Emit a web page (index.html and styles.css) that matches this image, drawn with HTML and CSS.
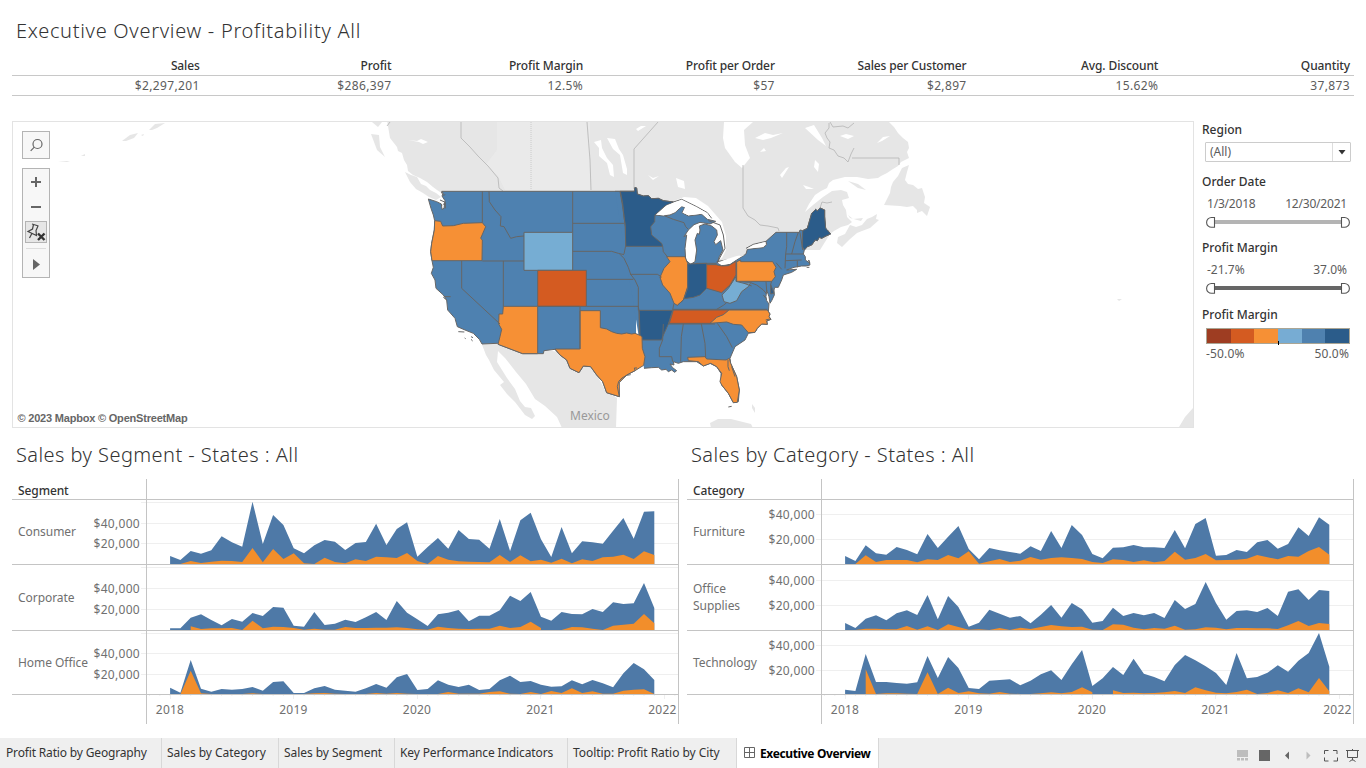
FILE: index.html
```
<!DOCTYPE html>
<html lang="en">
<head>
<meta charset="utf-8">
<title>Executive Overview</title>
<link rel="stylesheet" href="styles.css">
</head>
<body>
<main class="dash">
  <h1 class="title t-main">Executive Overview - Profitability All</h1>
  <section class="kpis">
    <div class="kpi"><b>Sales</b><span>$2,297,201</span></div>
    <div class="kpi"><b>Profit</b><span>$286,397</span></div>
    <div class="kpi"><b>Profit Margin</b><span>12.5%</span></div>
    <div class="kpi"><b>Profit per Order</b><span>$57</span></div>
    <div class="kpi"><b>Sales per Customer</b><span>$2,897</span></div>
    <div class="kpi"><b>Avg. Discount</b><span>15.62%</span></div>
    <div class="kpi"><b>Quantity</b><span>37,873</span></div>
  </section>
  <section class="middle">
    <div class="map">
      <svg class="mapsvg" viewBox="13 122 1180 305" width="1180" height="305">
        <g class="land">
          <path d="M387,120 L390,138 397,147 398,151 402,153 404,160 407,165 408,171 413,175 420,178 427,182 433,187 437,190 443,194 L640,200 L700,270 L780,250 L820,250 L830,234 834,231 841,227 848,225 852,222 847,217 846,210 843,205 842,200 849,198 847,192 841,190 832,191 823,197 813,205 805,212 809,204 815,195 821,191 827,188 829,183 833,180 845,177 857,177 868,179 878,178 881,176 887,173 893,169 898,166 901,162 909,158 907,152 909,148 908,142 903,138 898,133 894,127 887,120Z"/>
          <path d="M405,172 L411,175 417,177 421,184 426,186 430,190 436,193 441,197 436,200 429,197 423,193 416,189 410,182Z M371,134 L379,135 380,147 385,157 377,150Z M372,122 l10,0 -4,5Z"/>
          <path d="M850,225 L856,227 862,225 867,219 872,217 877,214 876,219 879,220 870,228 862,231 857,233 850,239 842,247 837,243 838,237 845,234Z M902,168 L909,165 907,172 905,180 908,184 913,185 918,189 922,188 925,197 924,203 930,207 927,216 922,211 917,213 917,210 913,206 907,207 900,206 884,205 887,199 890,193 891,187 893,182 898,176Z M848,181 L858,184 866,190 858,188Z M848,215 L853,219 863,218 861,221 850,218Z"/>
          <path d="M481,342 L500,344 520,352 544,350 560,352 577,368 590,362 605,390 617,398 616,428 562,428 557,417 545,406 535,399 526,384 516,372 505,358 498,351 497,362 507,378 515,389 520,401 525,407 531,408 535,416 532,419 525,415 515,402 507,394 500,385 504,382 494,370 489,360 486,355Z"/>
          <path d="M710,423 l8,-4 13,0 20,5 2,4 H711Z M752,404 l3,4 0,5 -3,-5Z M1179,427 l6,-10 8,-9 V427Z M1117,299 l5,0 -3,2Z"/>
          <path d="M122,141 l8,-6 8,-2 -4,5 -8,3Z M149,130 l6,-6 10,-1 -8,5 -5,2Z M58,161 l12,0 -3,1Z M81,156 l4,-2 0,2Z M141,135 l3,-1 -1,2Z"/>
        </g>
        <g class="relief">
          <path d="M497,122 H590 V190 H505 L498,176 486,164 497,150Z"/>
        </g>
        <g class="water">
          <path d="M724,122 H753 L744,130 745,145 750,158 742,168 735,162 725,148 723,138Z"/>
          <path d="M607,138 l8,1 4,10 4,6 4,14 0,6 -4,-2 -3,-18 -7,-6Z M594,142 l7,-2 1,8 5,10 6,7 1,12 -4,-2 -3,-12 -8,-7 0,-8Z M636,129 l5,-3 5,0 -8,5Z M648,175 l5,3 6,-2 -6,4Z M676,178 l8,3 1,8 -7,-2Z M408,140 l9,1 4,-2 7,3 -5,2 -4,-2Z M755,138 l10,-5 8,2 10,-2 -12,5 -8,2Z M805,128 l9,-3 8,13 4,8 -8,-6Z M840,136 l6,-2 8,2 -6,3Z M780,175 l6,-7 3,-1 -7,11Z M815,160 l4,4 -1,8 -4,-5Z M877,143 l6,-6 7,-1 -8,5Z M803,185 l6,2 5,2 -8,0Z M760,152 l4,-4 2,3Z"/>
          <path d="M674,201 L684,197 696,198 708,206 715,214 722,222 726,236 726,250 722,258 708,266 690,268 684,262 682,236 680,215 655,214Z"/>
        </g>
        <g class="borders">
          <path d="M461,122 V138 L470,147 478,156 488,166 498,178 499,188 503,191 M587,122 L590,160 591,190 M658,122 L634,149 634,189 M743,165 V208 L748,216 755,220 760,225 768,226 778,228 779,231 M830,122 l3,5 10,-1 5,2 6,-5 M829,123 l0,5 -4,5 2,5 3,4 -1,6 5,2 4,6 6,2 4,4 3,-8 3,-6 M852,158 H899 V165 M820,208 l2,-6 5,1 5,-1 M390,122 l-3,4"/>
          <path class="dash-line" d="M531,122 V190"/>
        </g>
        <g class="states">
          <path class="nostroke" d="M560,200 H636 V340 H600Z"/>
          <path transform="translate(420 180) scale(.33333)" d="M645,34 H65 L70,40 66,48 75,62 72,85 66,88 64,72 50,65 25,57 33,85 40,105 44,122 43,150 35,190 32,215 36,242 40,262 34,280 45,300 48,325 70,345 80,360 83,390 105,415 112,440 135,450 160,460 178,478 186,492 232,490 240,495 308,521 370,521 372,512 405,508 420,525 440,540 450,565 477,578 490,558 512,560 530,585 548,605 560,638 598,650 595,610 620,585 645,572"/>
          <g transform="translate(620 180) scale(.33333)">
            <path d="M-15,34 H43 L45,22 50,24 52,42 70,48 85,47 95,56 115,55 130,62 160,66 135,78 105,105 130,108 150,105 165,98 185,80 195,82 186,98 205,108 245,103 262,118 287,124 270,132 240,127 222,134 205,150 192,170 200,165 195,205 197,240 212,253 225,245 230,210 225,180 232,160 238,163 240,150 238,138 255,132 275,138 290,150 292,165 282,185 287,194 302,182 309,210 298,230 292,248 305,257 330,253 350,240 378,222 382,208 430,203 440,194 438,184 468,157 538,157 540,150 548,152 562,145 575,100 587,88 592,93 600,84 614,90 614,110 617,145 622,150 632,162 618,168 605,175 598,172 592,182 586,180 575,195 562,200 553,210 550,222 556,230 556,240 570,250 566,240 570,255 558,258 545,258 522,262 500,270 530,268 515,277 490,285 485,300 475,322 464,322 462,330 463,345 455,362 450,370 447,350 440,330 438,350 440,362 447,372 445,395 450,402 447,410 453,418 440,423 442,433 425,432 412,445 405,457 385,460 375,480 345,500 330,535 332,550 350,590 358,630 355,665 340,668 325,640 305,615 303,580 290,560 270,550 250,558 230,545 190,545 175,550 160,545 162,555 150,552 158,563 170,572 164,577 155,570 145,575 138,568 125,570 115,562 95,563 72,565"/>
            <path class="fill-dark" d="M0,34 H43 L45,22 50,24 52,42 70,48 85,47 95,56 115,55 130,62 160,66 135,78 105,105 104,125 92,140 95,165 125,190 128,199 H17 L16,140 8,80Z"/>
            <path class="fill-orange" d="M140,230 H195 L203,250 V320 L190,360 172,376 162,370 150,340 128,315 120,292 132,265 150,245Z"/>
            <path class="fill-dark" d="M203,252 L260,250 V325 L240,345 220,352 192,356 203,325Z"/>
            <path class="fill-deep" d="M260,254 H288 L305,258 325,257 348,244 V285 L330,315 305,338 285,332 260,325Z"/>
            <path class="fill-orange" d="M350,245 L362,240 V245 H458 L468,262 462,275 466,290 455,304 H350Z"/>
            <path class="fill-light" d="M348,290 V304 L372,310 392,308 385,320 365,335 350,362 330,370 312,365 306,345 325,325Z"/>
            <path class="fill-dark" d="M57,391 H158 L145,432 128,470 125,480 H65 V470 L58,465Z M452,313 L462,340 452,342Z"/>
            <path class="fill-deep" d="M160,390 H327 L315,402 270,430 H148Z"/>
            <path class="fill-orange" d="M327,390 H442 L450,402 447,410 453,418 440,423 442,433 425,432 412,445 405,457 385,458 365,435 340,433 320,426 270,430 290,412 310,404Z"/>
            <path class="fill-orange" d="M203,532 L255,530 260,537 318,540 328,535 332,550 350,590 358,630 352,667 340,668 325,640 305,615 300,605 305,580 290,560 272,550 250,558 235,545 205,542Z"/>
            <path class="fill-dark" d="M548,152 L562,145 575,100 587,88 592,93 600,84 614,90 614,110 617,145 622,150 632,162 618,168 605,175 598,172 592,182 586,180 575,195 562,200 553,210 547,200Z"/>
            <path class="line" d="M30,283 H112 L124,290 M0,223 L12,235 25,262 32,283 45,300 55,322 V391 M124,292 L120,292 M128,199 L130,215 142,230 M135,108 L160,118 192,128 197,140 205,148 M228,250 H290 M158,388 H442 M172,376 L190,360 M162,370 L158,390 M130,432 L128,480 118,505 V530 L155,530 158,545 M145,432 H285 M190,432 L184,470 182,545 M244,432 L255,490 257,532 M292,430 L320,470 337,503 M290,388 L310,376 320,368 M392,308 L410,315 430,330 440,342 M372,310 L395,318 M468,248 L485,268 M500,157 L500,200 497,222 495,265 M535,157 L525,185 515,222 M540,157 L548,210 M498,222 H550 M497,242 L545,240 M532,242 V262 M455,304 L452,313 M438,305 L440,330 M324,540 V560 L328,572 M335,560 L345,590"/>
            <path class="outline" d="M160,66 L185,58 230,80 262,98 275,115 M265,122 L300,135 310,165 315,205 300,232 292,248 M378,205 L400,193 438,184 M290,245 L330,238 370,226 M325,681 l10,-2 M430,345 l8,10 M560,262 l8,0 M437,420 l12,-3"/>
          </g>
          <g transform="translate(420 180) scale(.33333)">
            <path class="fill-orange" d="M44,122 L62,124 68,138 100,137 130,130 187,128 197,140 182,175 187,180 186,242 H36 L32,215 35,190 43,150Z"/>
            <path class="fill-light" d="M312,157 H458 V271 H312Z"/>
            <path class="fill-deep" d="M353,271 H499 V379 H353Z"/>
            <path class="fill-orange" d="M250,379 H353 V521 H308 L234,493 240,470 245,448 236,432 237,402 248,402Z"/>
            <path class="fill-orange" d="M480,392 H541 V443 L560,447 575,455 590,460 605,462 620,459 635,462 645,460 660,466 666,470 667,505 675,530 671,556 645,572 620,585 598,607 598,650 560,638 548,605 530,585 512,560 490,558 477,578 450,565 440,540 420,525 405,507 H480Z"/>
            <path class="line" d="M187,34 V128 M207,34 L208,65 225,90 243,110 241,138 252,140 272,175 290,170 312,168 M458,34 V157 M458,130 H612 M458,214 H575 L595,220 612,224 M500,298 H640 M499,379 H655 L658,400 660,466 M480,379 V507 M187,243 H312 M125,243 V325 L240,432 M250,243 V379 M353,379 H480 M601,34 L608,70 612,110 616,140 617,198 612,222 M70,352 L80,360 M72,350 L92,350"/>
            <path class="outline" d="M115,455 l18,1 M153,470 l6,3 M153,478 l5,5 M134,474 l3,2 M64,36 l6,10 6,-2 M60,60 l14,6 M68,75 l8,-8 0,18 M598,650 l-6,-30 4,-16 10,-10 14,-8 12,-2 M645,572 l-2,-8 8,0"/>
          </g>
        </g>
        <g class="water lakes" transform="translate(620 180) scale(.33333)">
          <path d="M108,104 L140,76 185,59 230,82 262,100 272,115 246,101 205,106 188,98 195,82 185,78 165,96 130,106Z M294,249 L312,240 350,228 374,224 350,238 330,251 305,255Z M380,206 L400,195 436,186 436,194 428,201Z"/>
        </g>
        <text class="mexico" x="570" y="420">Mexico</text>
        <text class="credit" x="17.500" y="422">© 2023 Mapbox © OpenStreetMap</text>
      </svg>
      <div class="tools">
        <div class="tool-box search">
          <svg width="26" height="26" viewBox="0 0 26 26"><circle cx="14.500" cy="12" r="4.500"/><path d="M11.300,15.200 L7.700,18.800"/></svg>
        </div>
        <div class="tool-box stack">
          <svg width="26" height="108" viewBox="0 0 26 108">
            <path class="thick" d="M8,13 H18 M13,8 V18 M8,38 H18"/>
            <rect class="pinbox" x="2.500" y="52.500" width="21" height="21"/>
            <path class="pin" d="M9,55 L15.500,57 M10.500,55.500 L9.500,60 L5,62.500 L13.500,66.500 L13,61.500 L15,57 M9,64.300 L6.500,69"/>
            <path class="cross" d="M15,64.500 L21.500,71 M21.500,64.500 L15,71"/>
            <path class="rule" d="M3,79.500 H23"/>
            <path class="play" d="M10,90 L17,95.500 10,101Z"/>
          </svg>
        </div>
      </div>
    </div>
    <aside class="filters">
      <h3>Region</h3>
      <div class="select"><span>(All)</span><i><svg width="8" height="5" viewBox="0 0 8 5"><path d="M0.500,0H7.500L4,4.500Z"/></svg></i></div>
      <h3 class="h-date">Order Date</h3>
      <div class="pair dates"><span>1/3/2018</span><span>12/30/2021</span></div>
      <svg class="slider" width="146" height="14" viewBox="0 0 146 14"><path class="bar light" d="M9,7H137"/><path class="knob" d="M9.500,2.500 H6.500 A4.900,4.900 0 0 0 6.500,12.300 H9.500Z M136.500,2.500 H139.500 A4.900,4.900 0 0 1 139.500,12.300 H136.500Z"/></svg>
      <h3 class="h-pm">Profit Margin</h3>
      <div class="pair"><span>-21.7%</span><span>37.0%</span></div>
      <svg class="slider" width="146" height="14" viewBox="0 0 146 14"><path class="bar" d="M9,7H137"/><path class="knob" d="M9.500,2.500 H6.500 A4.900,4.900 0 0 0 6.500,12.300 H9.500Z M136.500,2.500 H139.500 A4.900,4.900 0 0 1 139.500,12.300 H136.500Z"/></svg>
      <h3 class="h-leg">Profit Margin</h3>
      <div class="legend"><i class="c1"></i><i class="c2"></i><i class="c3"></i><i class="c4"></i><i class="c5"></i><i class="c6"></i></div>
      <div class="pair leg"><span>-50.0%</span><span>50.0%</span></div>
    </aside>
  </section>
  <section class="trends">
    <div class="trend" id="segment">
      <h2 class="title">Sales by Segment - States : All</h2>
    </div>
    <div class="trend" id="category">
      <h2 class="title">Sales by Category - States : All</h2>
    </div>
  </section>
</main>
<nav class="tabs">
  <a class="tab w1">Profit Ratio by Geography</a>
  <a class="tab w2">Sales by Category</a>
  <a class="tab w3">Sales by Segment</a>
  <a class="tab w4">Key Performance Indicators</a>
  <a class="tab w5">Tooltip: Profit Ratio by City</a>
  <a class="tab active"><svg width="12" height="12" viewBox="0 0 12 12"><path d="M.5,.5H10.500V10.500H.5Z M5.500,.5V10.500 M.5,5.500H10.500"/></svg><span>Executive Overview</span></a>
  <svg class="navicons" width="130" height="30" viewBox="1236 738 130 30">
    <path fill="#bdbdbd" d="M1237,750h11v7h-11z M1237,758h3v2.500h-3z M1241,758h3v2.500h-3z M1245,758h3v2.500h-3z M1306.500,751.500l4,4-4,4z"/>
    <path fill="#666" d="M1259,750h11v11h-11z M1289,751.500l-4,4 4,4z"/>
    <path fill="none" stroke="#555" d="M1324.500,754v-3.500h4 M1333,750.500h4v3.500 M1337.500,757.500v3.500h-4 M1328.500,761h-4v-3.500 M1346,750.500h13 M1347.500,751v6.500h10v-6.500 M1352.500,749v2 M1352.500,757.500v3 M1349.500,761.500l3,-2 3,2"/>
  </svg>
</nav>
<script src="charts.js"></script>
</body>
</html>
```
FILE: styles.css
```
* { box-sizing: border-box; }
body { margin: 0; width: 1366px; height: 768px; overflow: hidden; display: flex; flex-direction: column; background: #fff; color: #5c5c5c; font-family: "Noto Sans", "Open Sans", sans-serif; font-size: 12px; }
h1, h2, h3 { margin: 0; font-weight: 400; }
.dash { height: 738px; padding: 0 12px; }
.title { font-size: 20px; line-height: 28px; font-weight: 300; color: #333; padding-left: 4px; white-space: nowrap; letter-spacing: .44px; }
.t-main { padding-top: 17px; height: 57px; letter-spacing: .7px; }
.kpis { display: grid; grid-template-columns: repeat(7, 1fr); width: 1342px; height: 39px; }
.kpi { text-align: right; }
.kpi b, .kpi span { display: block; padding-right: 4px; border-bottom: 1px solid #c8c8c8; white-space: nowrap; }
.kpi b { height: 19px; line-height: 17px; color: #333; font-weight: 500; letter-spacing: -.12px; }
.kpi span { height: 20px; line-height: 19px; letter-spacing: .35px; }
.middle { display: flex; margin-top: 25px; height: 307px; }
.map { width: 1182px; height: 307px; border: 1px solid #e3e3e3; display: grid; }
.map > * { grid-area: 1 / 1; }
.mapsvg { display: block; }
.land { fill: #e6e6e6; }
.relief { fill: #ebebeb; opacity: .7; }
.water { fill: #fff; }
.borders path { fill: none; stroke: #b4b4b4; stroke-width: .8; }
.borders .dash-line { stroke-dasharray: 1 1; stroke: #c4c4c4; }
.states path { fill: #4e81b0; stroke: #666; stroke-width: 1px; vector-effect: non-scaling-stroke; stroke-linejoin: round; }
.states .nostroke { stroke: none; }
.states .fill-dark { fill: #2b5c8a; }
.states .fill-light { fill: #76add3; }
.states .fill-orange { fill: #f69035; }
.states .fill-deep { fill: #d45b21; }
.states .line, .states .outline { fill: none; }
.mexico { font-size: 12px; fill: #999; }
.credit { font-family: "Liberation Sans", sans-serif; font-size: 11px; font-weight: 700; fill: #666; letter-spacing: -.2px; }
.tools { padding: 9px; display: flex; flex-direction: column; gap: 9px; z-index: 1; }
.tool-box { width: 28px; border: 1px solid #b4b4b4; background: #f7f7f7; fill: none; stroke: #666; }
.tool-box svg { display: block; }
.search { height: 28px; stroke-width: 1.2; }
.stack { height: 110px; }
.thick { stroke-width: 2; }
.pinbox { fill: #e6e6e6; stroke: #b4b4b4; }
.pin { stroke: #444; stroke-width: 1.2; }
.cross { stroke: #333; stroke-width: 2.400; }
.rule { stroke: #ddd; }
.play { fill: #666; stroke: none; }
.filters { width: 160px; padding: 0 0 0 8px; }
.filters h3 { height: 20px; line-height: 17px; color: #333; font-size: 12px; font-weight: 500; }
.select { margin-left: 3px; width: 146px; height: 20px; border: 1px solid #ccc; border-radius: 1px; display: flex; justify-content: space-between; line-height: 18px; padding-left: 4px; margin-top: 1px; }
.select i { width: 18px; border-left: 1px solid #ddd; display: flex; align-items: center; justify-content: center; fill: #333; }
.filters .h-date { margin-top: 11px; }
.pair { display: flex; justify-content: space-between; width: 146px; padding: 0 1px 0 5px; line-height: 17px; margin-top: 2px; }
.dates { letter-spacing: -.2px; }
.slider { display: block; margin: 3px 0 0 3px; }
.bar { stroke: #666; stroke-width: 4; }
.bar.light { stroke: #b4b4b4; }
.knob { fill: #fff; stroke: #555; stroke-width: 1.1; }
.filters .h-pm { margin-top: 10px; }
.filters .h-leg { margin-top: 11px; height: 22px; }
.legend { display: flex; margin-left: 4px; width: 144px; height: 16px; border: 1px solid #aaa594; position: relative; }
.legend::after { content: ""; position: absolute; left: 71px; top: 12px; width: 1px; height: 4px; background: #000; }
.legend i { flex: 1; }
.c1 { background: #9e3d22; } .c2 { background: #d45b21; } .c3 { background: #f69035; }
.c4 { background: #77acd3; } .c5 { background: #4f81af; } .c6 { background: #2b5c8a; }
.pair.leg { width: 147px; padding-left: 4px; padding-right: 0; margin-top: 1px; letter-spacing: .15px; }
.trends { display: flex; gap: 8px; margin-top: 14px; }
.trend { width: 667px; position: relative; }
.trend .title { height: 37px; line-height: 26px; }
.trend::after { content: ""; position: absolute; left: 134px; top: 37px; width: 531px; height: 245px; border: solid #c4c4c4; border-width: 0 1px; pointer-events: none; }
.thead { height: 21px; border-bottom: 1px solid #c4c4c4; padding: 4px 0 0 6px; line-height: 16px; color: #333; font-weight: 500; letter-spacing: -.1px; }
.row { display: grid; grid-template-columns: 75px 54px 538px; border-bottom: 1px solid #c4c4c4; }
.row .name { padding: 0 0 1px 6px; align-self: center; line-height: 17px; color: #707070; white-space: nowrap; letter-spacing: -.05px; }
.row svg { display: block; }
.ticks { position: relative; color: #707070; letter-spacing: .3px; }
.ticks span { position: absolute; right: 1px; line-height: 16px; transform: translateY(-50%); }
.grid { stroke: #efefef; fill: none; }
.a-sales { fill: #4e79a7; }
.a-loss { fill: #f28e2b; }
.axis { display: flex; height: 29px; }
.axis svg { margin-left: 129px; overflow: visible; }
.axis text { fill: #707070; text-anchor: middle; font-size: 12px; letter-spacing: .2px; }
.tabs { height: 30px; background: #efefef; display: flex; color: #333; letter-spacing: -.05px; }
.tab { border-right: 1px solid #d8d8d8; line-height: 29px; padding-left: 6px; white-space: nowrap; }
.w1 { width: 162px; letter-spacing: -.16px; } .w2 { width: 117px; padding-left: 5px; } .w3 { width: 116px; padding-left: 5px; } .w4 { width: 173px; padding-left: 5px; letter-spacing: -.12px; } .w5 { width: 169px; padding-left: 5px; }
.active { width: 142px; background: #fff; color: #000; font-weight: 700; display: flex; align-items: center; gap: 4px; padding-left: 7px; letter-spacing: -.36px; }
.active svg { fill: none; stroke: #666; }
.navicons { margin-left: auto; }
```
FILE: charts.js
```
// Each series is stored in thirds of a pixel, measured down from y = 470.
// A pair [a, b] is a vertical jump inside one month.
var panels = [
  { id: 'segment', head: 'Segment', rows: [
    { name: 'Consumer', top: 500, h: 64, base: 282, grid: [502, 523, 543], lab: [523, 543],
      s: [258,270,243,251,241,199,217,230,95,222,135,165,235,250,226,210,215,240,219,216,161,225,177,157,260,231,204,236,180,207,209,236,147,243,151,128,208,261,171,250,214,217,221,182,144,206,125,124],
      l: [282,282,273,279,275,272,273,276,234,277,237,267,250,280,282,263,276,280,268,273,260,262,264,249,273,282,258,269,274,275,276,277,255,276,256,274,269,278,266,280,268,273,262,260,254,267,244,255] },
    { name: 'Corporate', top: 565, h: 65, base: 480, grid: [567, 588, 609], lab: [588, 609],
      s: [475,475,443,433,450,466,447,455,429,438,411,413,467,470,426,465,461,449,456,442,426,450,393,428,448,468,433,428,420,454,437,437,421,377,393,366,440,452,426,432,433,417,426,397,402,400,339,414],
      l: [480,480,[480,469],477,475,475,474,480,452,475,470,471,474,479,476,479,479,471,474,474,473,473,472,474,478,479,470,474,476,477,476,476,467,474,471,455,[474,480],480,480,471,472,476,480,467,464,461,432,460] },
    { name: 'Home Office', top: 631, h: 63, base: 673, grid: [633, 653, 674], lab: [653, 674],
      s: [653,668,570,656,665,657,659,657,651,662,636,634,669,669,655,648,659,662,665,655,642,653,622,612,660,657,631,644,651,644,660,657,631,617,636,633,644,650,649,631,643,630,640,652,610,579,598,630],
      l: [673,673,602,670,672,672,672,672,670,672,672,672,672,672,670,669,671,672,672,672,669,671,669,671,672,672,672,666,671,671,671,666,664,671,672,666,672,663,669,655,669,664,671,671,662,659,658,672] }
  ] },
  { id: 'category', head: 'Category', rows: [
    { name: 'Furniture', top: 500, h: 64, base: 282, grid: [514, 539], lab: [514, 539],
      s: [258,273,226,250,254,231,240,253,192,234,200,168,237,268,234,241,246,251,229,243,183,234,165,195,252,265,233,232,225,232,232,234,180,235,162,144,257,255,240,246,217,210,236,222,172,198,142,164],
      l: [282,282,256,276,270,270,270,277,268,270,255,265,244,281,274,267,276,272,261,269,264,262,264,267,276,279,268,270,276,271,277,273,245,269,264,252,271,270,269,266,255,262,268,258,260,243,231,254] },
    { name: 'Office<br>Supplies', top: 565, h: 65, base: 480, grid: [580, 605], lab: [580, 605],
      s: [459,474,446,436,451,430,421,435,375,448,378,411,470,458,419,431,443,438,460,434,405,443,399,418,458,453,413,438,429,436,429,444,390,417,402,336,399,449,423,421,426,414,438,365,358,390,360,363],
      l: [480,480,476,476,478,478,468,479,469,480,463,471,479,478,480,474,480,473,477,471,465,469,471,470,479,480,463,464,473,478,474,476,467,479,478,472,473,478,474,474,475,475,477,466,453,468,459,462] },
    { name: 'Technology', top: 631, h: 63, base: 673, grid: [645, 670], lab: [645, 670],
      s: [659,663,552,636,636,639,641,637,558,624,561,594,654,657,632,630,628,646,632,613,601,630,583,540,648,625,591,615,566,611,621,634,585,555,571,589,609,645,549,625,621,608,586,605,572,549,489,590],
      l: [673,673,[673,598],672,670,670,671,672,607,672,653,669,664,670,671,666,671,672,672,670,667,670,666,652,[667,673],673,[673,661],669,668,670,669,667,663,669,652,661,668,670,666,659,672,669,661,669,655,667,624,664] }
  ] }
];

function monthX(i) {
  return 29.1 + (i * 484.2) / 47;
}

function area(values, row, cls) {
  var base = 470 + row.base / 3 - row.top;
  var d = 'M' + monthX(0).toFixed(2) + ',' + (base + 1);
  values.forEach(function (v, i) {
    [].concat(v).forEach(function (y) {
      d += 'L' + monthX(i).toFixed(2) + ',' + (470 + y / 3 - row.top).toFixed(2);
    });
  });
  return '<path class="' + cls + '" d="' + d + 'V' + (base + 1) + 'Z"/>';
}

panels.forEach(function (p) {
  var html = '<div class="thead">' + p.head + '</div>';
  p.rows.forEach(function (r) {
    var lines = r.grid.map(function (y) { return 'M0,' + (y - r.top + 0.5) + 'H537'; }).join('');
    html += '<div class="row"><div class="name">' + r.name + '</div><div class="ticks">' +
      r.lab.map(function (y, i) { return '<span style="top:' + (y - r.top + 1) + 'px">' + (i ? '$20,000' : '$40,000') + '</span>'; }).join('') +
      '</div><svg width="538" height="' + r.h + '"><path class="grid" d="' + lines + '"/>' +
      area(r.s, r, 'a-sales') + area(r.l, r, 'a-loss') + '</svg></div>';
  });
  var axis = '', minor = '';
  [29, 152.4, 276, 399.4, 521.4].forEach(function (x, i) {
    axis += '<text x="' + x + '" y="19">' + (2018 + i) + '</text>';
    minor += 'M' + (Math.round(i === 4 ? 523 : x) + 0.5) + ',0v4';
  });
  for (var i = -2; i < 50; i++) minor += 'M' + monthX(i).toFixed(1) + ',0v1';
  html += '<div class="axis"><svg width="538" height="29"><path class="grid" d="' + minor + '"/>' + axis + '</svg></div>';
  document.getElementById(p.id).insertAdjacentHTML('beforeend', html);
});
```
